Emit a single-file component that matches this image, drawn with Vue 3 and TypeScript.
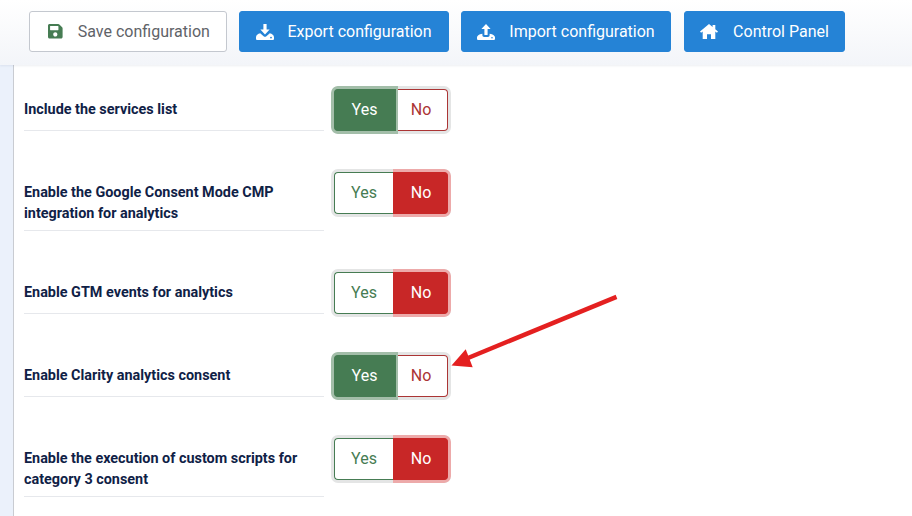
<script setup lang="ts">
interface Row { label: string; on: boolean }
const rows: Row[] = [
  { label: 'Include the services list', on: true },
  { label: 'Enable the Google Consent Mode CMP integration for analytics', on: false },
  { label: 'Enable GTM events for analytics', on: false },
  { label: 'Enable Clarity analytics consent', on: true },
  { label: 'Enable the execution of custom scripts for category 3 consent', on: false },
]
</script>

<template>
  <div class="page">
    <header class="toolbar">
      <button class="btn btn-light">
        <svg class="ico save" viewBox="0 32 448 448"><path fill="currentColor" d="M433.941 129.941l-83.882-83.882A48 48 0 0 0 316.118 32H48C21.49 32 0 53.49 0 80v352c0 26.51 21.49 48 48 48h352c26.51 0 48-21.49 48-48V163.882a48 48 0 0 0-14.059-33.941zM224 416c-35.346 0-64-28.654-64-64 0-35.346 28.654-64 64-64s64 28.654 64 64c0 35.346-28.654 64-64 64zm96-304.52V212c0 6.627-5.373 12-12 12H76c-6.627 0-12-5.373-12-12V108c0-6.627 5.373-12 12-12h228.52c3.183 0 6.235 1.264 8.485 3.515l3.48 3.48A11.996 11.996 0 0 1 320 111.48z"/></svg>
        <span>Save configuration</span>
      </button>
      <button class="btn btn-blue w-export">
        <svg class="ico" viewBox="0 0 18 16"><path fill="currentColor" fill-rule="evenodd" d="M7.400 0h3.200v5.400h3L9 10.400 4.400 5.400h3zM4.200 9.200l3.400 3c.8.700 2 .7 2.800 0l3.400-3c2.300.3 4.200 2 4.200 4.100V14.700c0 .7-.6 1.300-1.300 1.300H1.300C.6 16 0 15.400 0 14.700V13.300c0-2.100 1.900-3.800 4.200-4.100zM15 12.700a.9.900 0 1 0 0 1.800.9.900 0 0 0 0-1.800z"/></svg>
        <span>Export configuration</span>
      </button>
      <button class="btn btn-blue w-import">
        <svg class="ico" viewBox="0 0 18 16"><path fill="currentColor" fill-rule="evenodd" d="M9 0l4.600 5h-3v6H7.400V5h-3zM1.300 11.200C2.200 10.500 3.600 10 5.400 9.800v1.500c0 1 .8 1.700 1.700 1.700h3.800c.9 0 1.700-.7 1.700-1.700V9.800c1.800.2 3.200.7 4.100 1.400.8.600 1.300 1.300 1.300 2.100v1.400c0 .7-.6 1.300-1.300 1.300H1.300C.6 16 0 15.400 0 14.700v-1.400c0-.8.500-1.500 1.300-2.100zM15 12.900a.8.800 0 1 0 0 1.600.8.800 0 0 0 0-1.600z"/></svg>
        <span>Import configuration</span>
      </button>
      <button class="btn btn-blue w-panel">
        <svg class="ico home" viewBox="0 0 20 17"><path fill="currentColor" d="M10 0l4 3.300V1h3v4.800l3 2.500-1.200 1.500L17 8.300V17h-4.800v-5.500H7.800V17H3V8.300L1.200 9.800 0 8.300z"/></svg>
        <span>Control Panel</span>
      </button>
    </header>

    <div class="body">
      <aside class="rail"></aside>
      <main class="form">
        <div v-for="row in rows" :key="row.label" class="row">
          <div class="label">{{ row.label }}</div>
          <div class="toggle" :class="row.on ? 'on' : 'off'">
            <span class="seg yes">Yes</span>
            <span class="seg no">No</span>
          </div>
        </div>
      </main>
    </div>

    <svg class="arrow" width="912" height="516" viewBox="0 0 912 516">
      <line x1="616.500" y1="296.800" x2="468" y2="358" stroke="#e42020" stroke-width="4.500" />
      <path d="M451.500 365.500L465.700 349.300L472.700 367.300Z" fill="#e42020" />
    </svg>
  </div>
</template>

<style>
html, body { margin: 0; background: #fff; }
</style>

<style scoped>
.page {
  position: relative;
  width: 912px;
  height: 516px;
  overflow: hidden;
  background: #fff;
  font-family: Roboto, "Liberation Sans", sans-serif;
}
.toolbar {
  box-sizing: border-box;
  height: 65px;
  padding: 11px 0 0 29px;
  display: flex;
  align-items: flex-start;
  gap: 12px;
  background: linear-gradient(180deg, #ffffff 0%, #f3f5f9 100%);
  box-shadow: 0 1px 2px rgba(30, 50, 90, 0.08);
  position: relative;
}
.btn {
  box-sizing: border-box;
  height: 41px;
  display: flex;
  align-items: center;
  justify-content: center;
  gap: 13px;
  border-radius: 3px;
  font-family: inherit;
  font-size: 16px;
  padding: 0;
  white-space: nowrap;
}
.btn-light {
  width: 198px;
  background: #fff;
  border: 1px solid #c4c8cf;
  color: #5f6368;
  padding-left: 2px;
  gap: 15px;
}
.btn-light .ico { color: #467c53; }
.btn-blue {
  background: #2583d6;
  border: 1px solid #2583d6;
  color: #fff;
}
.w-export { width: 210px; }
.w-import { width: 210px; gap: 14px; }
.w-panel { width: 161px; margin-left: 1px; gap: 15px; }
.ico { width: 18px; height: 16px; flex: none; }
.ico.save { width: 14.600px; height: 14.600px; }
.ico.home { width: 18px; height: 15.300px; }

.body { display: flex; height: 451px; }
.rail {
  width: 13px;
  flex: none;
  background: #ebf1fb;
  border-right: 1px solid #c9ccd2;
}
.form { padding: 24px 0 0 10px; }
.row {
  display: flex;
  align-items: flex-start;
  gap: 10px;
  margin-bottom: 41px;
}
.label {
  box-sizing: border-box;
  width: 300px;
  min-height: 42px;
  padding: 9.700px 0 5.100px;
  border-bottom: 1px solid #e6e8ec;
  color: #0f2146;
  font-size: 14.400px;
  font-weight: 700;
  line-height: 21.600px;
}
.toggle {
  display: flex;
  height: 42px;
  border-radius: 4px;
  box-shadow: 0 0 0 3px #e4e5e5;
}
.seg {
  box-sizing: border-box;
  display: flex;
  align-items: center;
  justify-content: center;
  height: 42px;
  padding-bottom: 1px;
  font-size: 16px;
  background: #fff;
}
.yes {
  color: #467c53;
  border: 1px solid #467c53;
  border-right: 0;
  border-radius: 4px 0 0 4px;
}
.no {
  color: #ab3535;
  border: 1px solid #ab3535;
  border-left: 0;
  border-radius: 0 4px 4px 0;
}
.on .yes {
  width: 62px;
  padding-right: 2px;
  background: #467c53;
  color: #fff;
  box-shadow: 0 0 0 3px #a3bea9;
  clip-path: inset(-3px -2px -3px -3px round 6px 0 0 6px);
  position: relative;
}
.on .no { width: 52px; padding-right: 1px; }
.off .yes { width: 59px; }
.off .no {
  width: 55px;
  padding-left: 2px;
  background: #c82727;
  border-color: #c82727;
  color: #fff;
  box-shadow: 0 0 0 3px #edaaaa;
  clip-path: inset(-3px -3px -3px 0 round 0 6px 6px 0);
  position: relative;
}
.arrow {
  position: absolute;
  left: 0;
  top: 0;
  pointer-events: none;
}
</style>
